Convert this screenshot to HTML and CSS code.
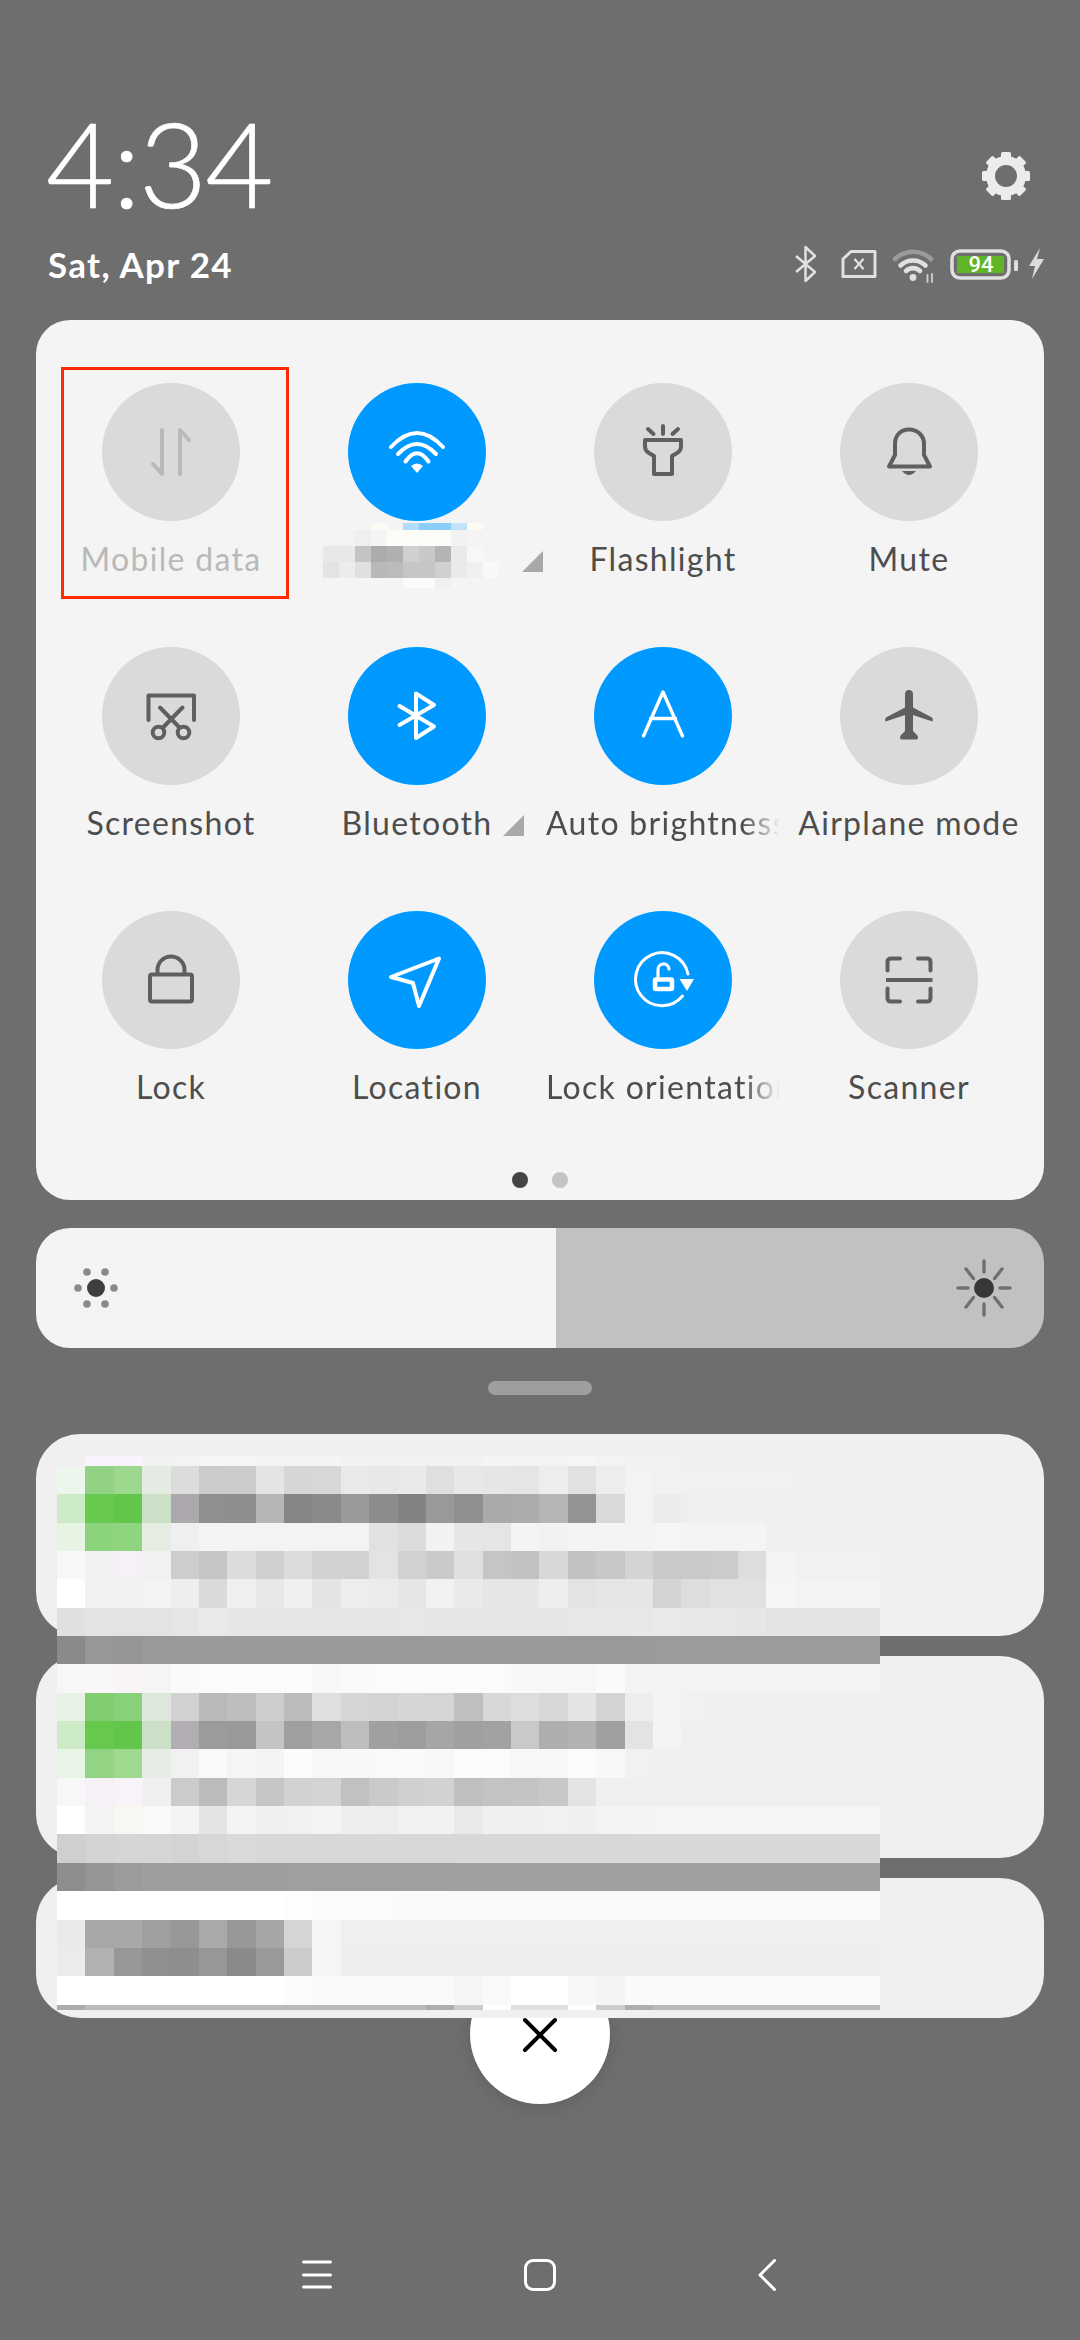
FILE: index.html
```html
<!DOCTYPE html>
<html lang="en">
<head>
    <meta charset="UTF-8">
    <meta name="viewport" content="width=device-width, initial-scale=1.0">
    <title>Control center</title>
    <link rel="stylesheet" href="styles.css">
</head>
<body>

    <header class="header">
        <div class="time-row">
            <div class="time">4:34</div>
            <svg class="gear" viewBox="0 0 50 50">
                <circle cx="25" cy="25" r="15.5" fill="none" stroke="#ececec" stroke-width="9"/>
                <g fill="#ececec">
                    <rect x="20" y="1" width="10" height="8" rx="1.5"/>
                    <rect x="20" y="1" width="10" height="8" rx="1.5" transform="rotate(45 25 25)"/>
                    <rect x="20" y="1" width="10" height="8" rx="1.5" transform="rotate(90 25 25)"/>
                    <rect x="20" y="1" width="10" height="8" rx="1.5" transform="rotate(135 25 25)"/>
                    <rect x="20" y="1" width="10" height="8" rx="1.5" transform="rotate(180 25 25)"/>
                    <rect x="20" y="1" width="10" height="8" rx="1.5" transform="rotate(225 25 25)"/>
                    <rect x="20" y="1" width="10" height="8" rx="1.5" transform="rotate(270 25 25)"/>
                    <rect x="20" y="1" width="10" height="8" rx="1.5" transform="rotate(315 25 25)"/>
                </g>
            </svg>
        </div>
        <div class="date-row">
            <div class="date">Sat, Apr 24</div>
            <div class="status-icons">
                <svg width="23" height="40" viewBox="0 0 23 40" fill="none" stroke="#e0e0e0" stroke-width="2.5" stroke-linejoin="round">
                    <path d="M2 12 L21 28 L11.5 37 V3 L21 12 L2 28"/>
                </svg>
                <svg width="36" height="40" viewBox="0 0 36 40" fill="none" stroke="#e0e0e0" stroke-linejoin="round" stroke-linecap="round">
                    <path stroke-width="3" d="M10 7.5 H34 V32.5 H2 V15 Z"/>
                    <path stroke-width="2.2" d="M14 15.5 L22 24.5 M22 15.5 L14 24.5"/>
                </svg>
                <svg width="43" height="40" viewBox="0 0 43 40" fill="none" stroke-linecap="round">
                    <path stroke="#9a9a9a" stroke-width="4.6" d="M3 15 A26 26 0 0 1 39 15"/>
                    <path stroke="#e0e0e0" stroke-width="4.6" d="M8.5 21.5 A18 18 0 0 1 33.5 21.5"/>
                    <path stroke="#e0e0e0" stroke-width="4.6" d="M14 27 A10 10 0 0 1 28 27"/>
                    <circle cx="21" cy="33.5" r="3.4" fill="#e0e0e0"/>
                    <path stroke="#d0d0d0" stroke-width="1.8" d="M35.5 31 V38 M40 30 V38"/>
                </svg>
                <svg width="68" height="40" viewBox="0 0 68 40">
                    <rect x="2" y="7" width="57" height="27" rx="8" fill="none" stroke="#e0e0e0" stroke-width="3.5"/>
                    <rect x="7" y="12" width="47" height="17" fill="#5fb526"/>
                    <text class="battery-text" x="31" y="28" text-anchor="middle">94</text>
                    <rect x="64" y="16" width="4" height="11" rx="1.5" fill="#e0e0e0"/>
                </svg>
                <svg width="18" height="40" viewBox="0 0 18 40">
                    <path fill="#dcdcdc" d="M13 4 L2 22 H8 L5 35 L17 15 H10 Z"/>
                </svg>
            </div>
        </div>
    </header>

    <section class="panel">
        <div class="tiles">

            <div class="tile tile-off">
                <div class="circle">
                    <svg class="icon stroke-off" viewBox="0 0 138 138"><path d="M60 47 V91 L51 81 M78 91 V47 L87 57"/></svg>
                </div>
                <div class="label">Mobile data</div>
                <div class="red-box"></div>
            </div>

            <div class="tile">
                <div class="circle circle-on">
                    <svg class="icon stroke-on" viewBox="0 0 138 138">
                        <path d="M43 64 Q69 36 95 64 M50 71 Q69 51 88 71 M57.5 78.5 Q69 62 80.5 78.5"/>
                        <path fill="#fff" stroke="none" d="M63 83 Q69 78 75 83 L69 90 Z"/>
                    </svg>
                </div>
                <div class="label">&nbsp;</div>
                <div class="mosaic wifi-name" id="wifiMosaic"></div>
                <div class="corner corner-wifi"></div>
            </div>

            <div class="tile">
                <div class="circle">
                    <svg class="icon stroke-dark" viewBox="0 0 138 138">
                        <path d="M51 57 H87 V63 Q87 68 83 70 L78 73 V91 H60 V73 L55 70 Q51 68 51 63 Z M69 43 V51 M54 46 L59.5 51 M84 46 L78.5 51"/>
                    </svg>
                </div>
                <div class="label">Flashlight</div>
            </div>

            <div class="tile">
                <div class="circle">
                    <svg class="icon stroke-dark" viewBox="0 0 138 138">
                        <path d="M69 46.5 C60 46.5 55 53 55 61 V72 L49 83.5 H90 L84 72 V61 C84 53 78 46.5 69 46.5 Z"/>
                        <path fill="#5f5f60" stroke="none" d="M62 88 H76 Q69 96 62 88 Z"/>
                    </svg>
                </div>
                <div class="label">Mute</div>
            </div>

            <div class="tile">
                <div class="circle">
                    <svg class="icon stroke-dark" viewBox="0 0 138 138">
                        <path d="M46.5 73 V48.5 H92 V73 M58 60.5 L77 80 M80.5 60.5 L61.5 80"/>
                        <circle cx="56.5" cy="85.5" r="5.8"/>
                        <circle cx="81.5" cy="85.5" r="5.8"/>
                    </svg>
                </div>
                <div class="label">Screenshot</div>
            </div>

            <div class="tile">
                <div class="circle circle-on">
                    <svg class="icon stroke-on" viewBox="0 0 138 138"><path d="M51.5 59 L86 79.5 L68 91 V46.5 L86 58 L51.5 78"/></svg>
                </div>
                <div class="label">Bluetooth</div>
                <div class="corner corner-bt"></div>
            </div>

            <div class="tile">
                <div class="circle circle-on">
                    <svg class="icon stroke-on thin" viewBox="0 0 138 138"><path d="M49.5 89 L69 45 L88.5 89 M56.5 71.5 H81.5"/></svg>
                </div>
                <div class="label label-fade">Auto brightness</div>
            </div>

            <div class="tile">
                <div class="circle">
                    <svg class="icon" viewBox="0 0 138 138">
                        <path fill="#5f5f60" d="M69 43 Q73 43 73 47.5 V60.5 L92 70.5 Q93.5 72 92.5 74.5 L73 68 V84 L77.5 88.5 Q79 92.5 76 92.5 H62 Q59 92.5 60.5 88.5 L65 84 V68 L45.5 74.5 Q44.5 72 46 70.5 L65 60.5 V47.5 Q65 43 69 43 Z"/>
                    </svg>
                </div>
                <div class="label">Airplane mode</div>
            </div>

            <div class="tile">
                <div class="circle">
                    <svg class="icon stroke-dark" viewBox="0 0 138 138">
                        <rect x="48" y="63.5" width="42" height="27" rx="2"/>
                        <path d="M55.5 63 V59 A13.5 13.5 0 0 1 82.5 59 V63"/>
                    </svg>
                </div>
                <div class="label">Lock</div>
            </div>

            <div class="tile">
                <div class="circle circle-on">
                    <svg class="icon stroke-on" viewBox="0 0 138 138"><path d="M91 47.5 L43 66 L65 72 L71 95 Z"/></svg>
                </div>
                <div class="label">Location</div>
            </div>

            <div class="tile">
                <div class="circle circle-on">
                    <svg class="icon stroke-on" viewBox="0 0 138 138">
                        <path stroke-width="3" d="M88.5 85 A26.5 26.5 0 1 1 94 63"/>
                        <path fill="#fff" stroke="none" d="M85.5 68 H100 L93 80 Z"/>
                        <rect x="61" y="68.5" width="17" height="9.5" rx="1" stroke-width="4.5"/>
                        <path stroke-width="3.2" d="M64 66 V59 A5.5 5.5 0 0 1 75 58"/>
                    </svg>
                </div>
                <div class="label label-fade">Lock orientation</div>
            </div>

            <div class="tile">
                <div class="circle">
                    <svg class="icon stroke-dark" viewBox="0 0 138 138">
                        <path d="M47.5 59.5 V51 Q47.5 47.5 51 47.5 H60 M78 47.5 H87 Q90.5 47.5 90.5 51 V59.5 M47.5 77.5 V87 Q47.5 90.5 51 90.5 H60 M78 90.5 H87 Q90.5 90.5 90.5 87 V77.5"/>
                        <path stroke-linecap="butt" d="M46 69 H92.5"/>
                    </svg>
                </div>
                <div class="label">Scanner</div>
            </div>

        </div>
        <div class="dots">
            <span class="dot dot-active"></span>
            <span class="dot"></span>
        </div>
    </section>

    <section class="slider">
        <div class="slider-fill">
            <svg class="sun-low" viewBox="0 0 48 48">
                <circle cx="24" cy="24" r="9" fill="#3e3e3e"/>
                <g fill="#8a8a8a">
                    <circle cx="15" cy="8" r="3.8"/>
                    <circle cx="33" cy="8" r="3.8"/>
                    <circle cx="6" cy="24" r="3.8"/>
                    <circle cx="42" cy="24" r="3.8"/>
                    <circle cx="15" cy="40" r="3.8"/>
                    <circle cx="33" cy="40" r="3.8"/>
                </g>
            </svg>
        </div>
        <div class="slider-rest">
            <svg class="sun-high" viewBox="0 0 60 60">
                <circle cx="30" cy="30" r="10" fill="#383838"/>
                <path stroke="#707070" stroke-width="3.4" stroke-linecap="round" d="M30 3 V14 M30 46 V57 M12 11 L19.5 20.5 M48 11 L40.5 20.5 M12 49 L19.5 39.5 M48 49 L40.5 39.5 M4 30 H14 M46 30 H56"/>
            </svg>
        </div>
    </section>

    <div class="handle"></div>

    <section class="notifications">
        <div class="card card-tall"></div>
        <div class="card card-tall"></div>
        <div class="card card-short"></div>
        <div class="mosaic notif-blur" id="notifMosaic"></div>
    </section>

    <div class="close-btn">
        <svg width="36" height="36" viewBox="0 0 36 36">
            <path stroke="#000" stroke-width="4" stroke-linecap="round" d="M3 3 L33 33 M33 3 L3 33"/>
        </svg>
    </div>

    <nav class="nav">
        <svg class="nav-menu" width="30" height="32" viewBox="0 0 30 32">
            <path stroke="#fff" stroke-width="3" stroke-linecap="round" d="M1.5 3 H28.5 M1.5 16 H28.5 M1.5 28 H28.5"/>
        </svg>
        <div class="nav-home"></div>
        <svg class="nav-back" width="18" height="32" viewBox="0 0 18 32">
            <path fill="none" stroke="#fff" stroke-width="3" stroke-linecap="round" stroke-linejoin="round" d="M16.5 1.5 L2 16 L16.5 30.5"/>
        </svg>
    </nav>

    <script src="mosaic.js"></script>
</body>
</html>
```

FILE: styles.css
```css
* {
    box-sizing: border-box;
}
body {
    margin: 0;
    width: 1080px;
    height: 2340px;
    overflow: hidden;
    background: #6e6e6e;
    font-family: Lato, "Noto Sans", sans-serif;
}

/* top of the shade */
.header {
    padding: 104px 35px 0 46px;
    height: 320px;
    color: #fff;
}
.time-row {
    display: flex;
    justify-content: space-between;
    align-items: flex-start;
}
.time {
    font-size: 118px;
    line-height: 118px;
    font-weight: 300;
    letter-spacing: -2px;
    -webkit-text-stroke: 0.7px #fff;
}
.gear {
    width: 50px;
    height: 50px;
    margin: 47px 14px 0 0;
}
.date-row {
    display: flex;
    justify-content: space-between;
    align-items: center;
    margin-top: 22px;
}
.date {
    margin-left: 2px;
    font-size: 35px;
    line-height: 40px;
    font-weight: 700;
    letter-spacing: 1.3px;
}
.status-icons {
    display: flex;
    align-items: center;
}
.status-icons svg + svg {
    margin-left: 15px;
}
.status-icons svg:nth-child(2) {
    margin-left: 24px;
}
.status-icons svg:last-child {
    margin-left: 9px;
}
.battery-text {
    font-family: Roboto, sans-serif;
    font-size: 22px;
    font-weight: 500;
    fill: #fff;
}

/* quick settings */
.panel {
    margin: 0 36px;
    padding: 63px 12px 12px;
    background: #f4f4f4;
    border-radius: 34px;
}
.tiles {
    display: grid;
    grid-template-columns: repeat(4, 246px);
    grid-auto-rows: 220px;
    row-gap: 44px;
}
.tile {
    position: relative;
    display: flex;
    flex-direction: column;
    align-items: center;
}
.circle {
    width: 138px;
    height: 138px;
    border-radius: 50%;
    background: #dadada;
}
.circle-on {
    background: #0099ff;
}
.icon {
    display: block;
    width: 138px;
    height: 138px;
    fill: none;
}
.stroke-dark, .stroke-on, .stroke-off {
    stroke-width: 4;
    stroke-linecap: round;
    stroke-linejoin: round;
}
.stroke-dark {
    stroke: #5f5f60;
}
.stroke-on {
    stroke: #fff;
}
.stroke-off {
    stroke: #b9b9b9;
}
.thin {
    stroke-width: 3.4;
}
.label {
    margin-top: 16px;
    font-size: 32px;
    line-height: 44px;
    letter-spacing: 1.3px;
    color: #4d4d4d;
    white-space: nowrap;
}
.tile-off .label {
    color: #b9b9b9;
}
.label-fade {
    width: 234px;
    overflow: hidden;
    -webkit-mask-image: linear-gradient(to right, #000 84%, transparent 100%);
    mask-image: linear-gradient(to right, #000 84%, transparent 100%);
}
.red-box {
    position: absolute;
    left: 13px;
    top: -16px;
    width: 228px;
    height: 232px;
    border: 3px solid #ff2a00;
}
.corner {
    position: absolute;
    top: 168px;
    width: 21px;
    height: 21px;
    background: #a8a8a8;
    clip-path: polygon(100% 0, 100% 100%, 0 100%);
}
.corner-wifi {
    left: 228px;
}
.corner-bt {
    left: 209px;
}
.dots {
    display: flex;
    justify-content: center;
    gap: 24px;
    margin-top: 41px;
}
.dot {
    width: 16px;
    height: 16px;
    border-radius: 50%;
    background: #c4c4c4;
}
.dot-active {
    background: #444;
}

/* brightness */
.slider {
    display: flex;
    height: 120px;
    margin: 28px 36px 0;
    border-radius: 34px;
    overflow: hidden;
}
.slider-fill {
    display: flex;
    align-items: center;
    width: 520px;
    padding-left: 36px;
    background: #f4f4f4;
}
.slider-rest {
    flex: 1;
    display: flex;
    align-items: center;
    justify-content: flex-end;
    padding-right: 30px;
    background: #c1c1c1;
}
.sun-low {
    width: 48px;
    height: 48px;
}
.sun-high {
    width: 60px;
    height: 60px;
}
.handle {
    width: 104px;
    height: 14px;
    margin: 33px auto 0;
    border-radius: 7px;
    background: #9e9e9e;
}

/* notifications, blurred out in the screenshot */
.notifications {
    position: relative;
    display: flex;
    flex-direction: column;
    gap: 20px;
    margin: 39px 36px 0;
}
.card {
    background: #f0f0f0;
    border-radius: 44px;
}
.card-tall {
    height: 202px;
}
.card-short {
    height: 140px;
}
.mosaic {
    position: absolute;
    display: grid;
    z-index: 2;
}
.notif-blur {
    left: 21px;
    top: 22px;
    width: 823px;
    grid-template-columns: repeat(29, 1fr);
    grid-template-rows: 10px repeat(19, 28.35px) 5.4px;
}
.wifi-name {
    left: 13px;
    top: 140px;
    width: 192px;
    grid-template-columns: repeat(12, 16px);
    grid-template-rows: 7px 16px 16px 16px 10px;
}

.close-btn {
    display: flex;
    align-items: center;
    justify-content: center;
    width: 140px;
    height: 140px;
    margin: -54px auto 0;
    padding-top: 2px;
    border-radius: 50%;
    background: #fff;
    box-shadow: 0 4px 16px rgba(0, 0, 0, 0.12);
}

/* navigation bar */
.nav {
    display: flex;
    margin: 155px 0 0 302px;
}
.nav-home {
    width: 32px;
    height: 32px;
    margin: 0 202px 0 192px;
    border: 3px solid #fff;
    border-radius: 9px;
}
```

FILE: mosaic.js
```js
// colours of the pixelated areas, row by row
// two digits = a grey (f0 -> #f0f0f0), six digits = a full colour
const notifRows = [
    "f0eef0 f9f3fd f9f3fd f2 f3 f5 f5 f3 f4 f4 f2 f2 f2 f2 f2 f4 f4 f3 f6 f3 f1 f1 f0 f0 f0 f0 f0 f0 f0",
    "edf6ed 92d285 9dd88f e3ebe2 dc cb cc e4 d6 d7 e9 e8 ea df e8 e6 e5 ed e1 ed f3 f1 f1 f1 f1 f1 f0 f0 f0",
    "cdeac6 66c84c 62c64a cce0c8 aca8ad 8f 8e b6 85 8a 99 8c 82 99 8f aa ac b5 94 d9 f3 ec ef ef ef f0 f0 f0 f0",
    "e7f4e4 8cd47b 8fd57f e6eee3 ef f3 f3 f3 f3 f3 f3 e1 dc f2 e6 e5 f4 f2 f4 f4 f4 f5 f4 f4 f4 f0 f0 f0 f0",
    "f8f6f8 f3f1f3 f6f1f6 f1 cd c6 dc cf dc d2 d2 e3 d2 ca df c5 c2 d8 c2 c8 d4 c9 c9 cb dd f4 f1 f1 f1",
    "ff f2 f2 f4 ee da ef e7 f0 e4 ed eb e6 f1 ea e6 e6 ee e3 e6 e6 d3 dd e1 e1 f5 f3 f3 f3",
    "e0 e3 e3 e3 e5 e9 e6 e6 e6 e6 e6 e6 e7 e6 e6 e6 e6 e6 e7 e8 e8 ea e8 e7 e6 e3 e3 e3 e3",
    "8a 97 96 99 99 99 99 99 99 99 99 99 99 99 99 99 99 99 99 99 9a 9b 9b 9b 9b 9b 9b 9b 9b",
    "f8f6f8 faf7fa f8f4f8 f5 fa fb fb fb fb f8 fa fb fb fb fc fb f8 f8 f7 fa f4 f3 f3 f3 f3 f3 f3 f3 f3",
    "e6f2e4 80cc6f 88d179 dee7dc d1 b9 be cd bc df d6 d3 d6 d5 bf d8 dd d8 e4 d3 ed f3 f1 f0 f0 f0 f0 f0 f0",
    "cdeac6 66c84c 62c64a cce0c8 b1adb3 9b 99 c4 9f a7 bd a0 9d a6 a0 a2 c9 ae b2 a0 e3 f4 f0 f0 f0 f0 f0 f0 f0",
    "e8f4e6 92d483 9fd98f e7ede5 f1 fa f5 f4 fb f7 f8 f9 f9 f7 fb fb f7 f7 fb f7 f1 f0 f0 f0 f0 f0 f0 f0 f0",
    "f8f7f8 f6f0f7 f8f3f9 f0 cb bb d6 c6 d2 d4 c1 ca d0 d2 c0 c3 c4 c8 e3 ef ef ef ef ef ef ef ef ef ef",
    "ff f4f5f2 f7f7f4 f9 f4 e3 f3 f0 f1 f3 ee ed f2 f2 e9 f0 f0 f1 f0 f3 f4 f5 f5 f5 f5 f5 f5 f5 f5",
    "cf d3 d5 d5 d3 d7 d9 d8 d8 d8 d8 d8 d8 d8 d8 d8 d8 d8 d8 d8 d8 d8 d8 d8 d8 d8 d8 d8 d8",
    "8e 95 9b 9e 9e 9e 9e 9e 9f 9f 9f 9f 9f 9f a0 a0 a0 a0 a0 a0 a0 a0 a0 a0 a0 a0 a0 a0 a0",
    "ff ff ff ff ff ff ff ff fd fb fb fb fa fa fa fa fa fa fa fa fa fa fa fa fa fa fa fa fa",
    "ea a8 a8 9f 97 aa 98 a6 d5 f5 ef ef ef ef ef ef ef ef ef ef ef ef ef ef ef ef ef ef ef",
    "eb b1 97 8f 8e 97 8a 99 cc f5 ee ee ee ee ee ee ee ee ee ee ee ee ee ee ee ee ee ee ee",
    "ff ff ff ff ff ff ff ff fc fa fa fa fa fa f5 f9 ff ff f8 f4 fa fa fa fa fa fa fa fa fa",
    "ac ba ba ba ba ba ba ba ba ba ba ba ba ad cc ff e0 e0 ff cc ae ba ba ba ba ba ba ba ba"
];

const wifiRows = [
    "f4 f4 f4 f5 fcfbf3 f5 b3dcfa 8ccdfa 8ccdfa c2e3f9 fcfbf3 f4",
    "f4 f3 f3 ef f4 fdfcf7 fdfcf7 fdfcf7 fcfbf7 f2 f4 f4",
    "f3 e8 e8 c4 ac b0 d0 c8 b4 e9 f7 f4",
    "f3 e3 ec e0 b8 bb c6 c6 d0 ea f0 f8",
    "f4 f4 f4 f4 f5 f4 fb fb f0 f5 f4 f4"
];

function fillMosaic(id, rows) {
    const box = document.getElementById(id);
    rows.forEach(row => {
        row.split(" ").forEach(code => {
            let cell = document.createElement("div");
            cell.style.background = "#" + (code.length === 2 ? code + code + code : code);
            box.appendChild(cell);
        });
    });
}

fillMosaic("notifMosaic", notifRows);
fillMosaic("wifiMosaic", wifiRows);
```
